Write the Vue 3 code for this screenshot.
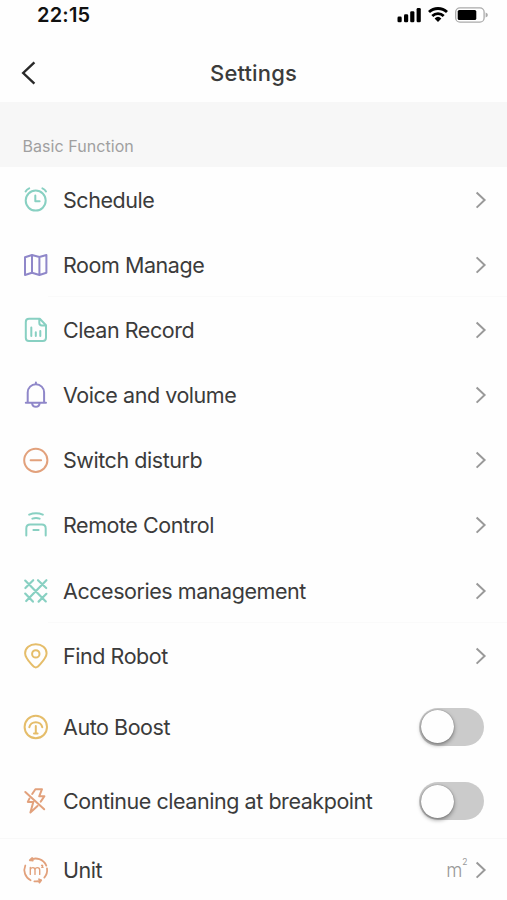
<script setup>
import { ref } from 'vue'

const rows = ref([
  { icon: 'clock', label: 'Schedule', tone: 'mint' },
  { icon: 'map', label: 'Room Manage', tone: 'violet' },
  { icon: 'file', label: 'Clean Record', tone: 'mint' },
  { icon: 'bell', label: 'Voice and volume', tone: 'violet' },
  { icon: 'minus', label: 'Switch disturb', tone: 'orange' },
  { icon: 'remote', label: 'Remote Control', tone: 'mint' },
  { icon: 'mesh', label: 'Accesories management', tone: 'mint' },
  { icon: 'pin', label: 'Find Robot', tone: 'gold' },
  { icon: 'boost', label: 'Auto Boost', tone: 'gold', toggle: true, on: false },
  { icon: 'flash', label: 'Continue cleaning at breakpoint', tone: 'orange', toggle: true, on: false },
  { icon: 'unit', label: 'Unit', tone: 'orange', value: 'm', power: '2' },
])
</script>

<template>
  <div class="screen">
    <div class="status">
      <span class="time">22:15</span>
      <svg class="signals" width="92" height="18" viewBox="0 0 92 18">
        <g fill="#000">
          <rect x="0.5" y="10.6" width="4.2" height="5.6" rx="1.3" />
          <rect x="7" y="8.2" width="4.2" height="8" rx="1.3" />
          <rect x="13.2" y="5.2" width="4.2" height="11" rx="1.3" />
          <rect x="19.6" y="1.9" width="4.2" height="14.3" rx="1.3" />
          <path d="M37.6 12.4 a5 5 0 0 1 6.8 0 L41 16 Z" />
        </g>
        <path d="M32 6.1 a13 13 0 0 1 18 0 M35.3 10 a8.2 8.2 0 0 1 11.4 0" fill="none" stroke="#000" stroke-width="2.8" />
        <rect x="58.7" y="1.9" width="28.4" height="14.2" rx="4.2" fill="#fff" stroke="#aaa" stroke-width="1.3" />
        <rect x="60.7" y="4" width="18.6" height="10" rx="1.6" fill="#000" />
        <path d="M88.6 6.5 q2.3 .6 2.3 2.5 q0 1.9 -2.3 2.5z" fill="#aaa" />
      </svg>
    </div>
    <header class="nav">
      <svg class="back" width="16" height="24" viewBox="0 0 16 24"><path d="M14.4 1.3 L3.2 12 L14.4 22.7" /></svg>
      <h1>Settings</h1>
    </header>
    <div class="section">Basic Function</div>
    <main>
      <div v-for="row in rows" :key="row.label" class="row" :class="[row.icon, { tall: row.toggle }]">
        <svg class="icon" :class="row.tone" width="28" height="28" viewBox="0 0 28 28">
          <g v-if="row.icon === 'clock'">
            <circle cx="13.7" cy="14.6" r="10" />
            <path d="M13.3 9.4 V15.3 H17.6 M3.6 5.4 Q4.8 3.3 7.2 2.3 M20.4 2.3 Q22.8 3.3 24 5.4" />
          </g>
          <g v-else-if="row.icon === 'map'">
            <path d="M3 6.3 L10 4 L17.4 6 L24.4 4 V21.8 L17.4 24 L10 21.8 L3 24 Z M10 4 V21.8 M17.4 6 V24" />
          </g>
          <g v-else-if="row.icon === 'file'">
            <path d="M7 2.8 H17.8 L24 9.2 V21.8 Q24 25 20.8 25 H7 Q3.8 25 3.8 21.8 V6 Q3.8 2.8 7 2.8 Z M17.3 3 V6.8 Q17.3 9.6 20 9.6 H24" />
            <path d="M9.3 11.5 V20 M13.8 16.2 V20 M18.3 15 V20" />
          </g>
          <g v-else-if="row.icon === 'bell'">
            <path d="M3.8 21.8 H24 M5.7 21.6 V11.4 A8.2 8.2 0 0 1 22.1 11.4 V21.6 M13.9 1.6 V3 M10 22.1 Q10.5 25.8 13.9 25.8 Q17.2 25.8 17.7 22.1" />
          </g>
          <g v-else-if="row.icon === 'minus'">
            <circle cx="13.8" cy="14.3" r="11.6" /><path d="M8.6 14.2 H19.1" />
          </g>
          <g v-else-if="row.icon === 'remote'">
            <path d="M7.2 3.6 Q14 .8 20.8 3.6 M10.4 7.6 Q14 6.4 17.6 7.6 M4.3 24.6 V17.5 Q4.3 13.6 8.2 13.6 H19.8 Q23.7 13.6 23.7 17.5 V24.6 M11.4 19 H16.6" />
          </g>
          <g v-else-if="row.icon === 'mesh'" class="bold">
            <path d="M3.2 3.6 L23.8 24.4 M24.4 3.2 L4.2 24 M3.4 11 L11.2 3.2 M16 3.2 L24.2 11 M3.2 16.6 L10.9 24.6 M16.6 24.6 L24.4 16.8" />
          </g>
          <g v-else-if="row.icon === 'pin'">
            <path d="M13.8 25.4 Q11.9 25.4 9.3 22.2 C5.8 18.2 3.1 15 3.1 11.2 C3.1 5.8 7.8 2.2 13.8 2.2 C19.9 2.2 24.6 5.8 24.6 11.2 C24.6 15 21.8 18.2 18.3 22.2 Q15.7 25.4 13.8 25.4 Z" />
            <circle cx="13.8" cy="11.9" r="3.7" />
          </g>
          <g v-else-if="row.icon === 'boost'">
            <circle cx="13.8" cy="14" r="11.2" />
            <path d="M7.3 14.2 A6.6 6.1 0 0 1 20.3 14.2 M13.8 13 V20.2 M12 20.4 H15.6" />
          </g>
          <g v-else-if="row.icon === 'flash'">
            <path d="M10.2 7 L13.4 2.2 H20 L17.2 9.3 H22.4 L18.7 14.6 M7.4 11.6 L5.8 14.9 H11.3 L8.4 25.5 L15.5 19 M3.3 5 L22.2 22.3" />
          </g>
          <g v-else>
            <path class="ring" d="M3.3 9.5 A11.4 11.4 0 0 0 8.6 24.2 M7.8 4.2 A11.4 11.4 0 0 1 24.3 9.6 M25 12.4 A11.4 11.4 0 0 1 22.3 21.6 M19.2 24.2 A11.4 11.4 0 0 1 12.4 25.3 M10.2 2 L7.8 4.2 L10.8 4.6 M17 23.2 L19.2 24.2 L17.4 26.6" />
            <path class="thin" d="M8.3 18.4 V11.4 M8.3 13.4 Q9 11.6 10.8 11.6 Q13 11.6 13 14 V18.4 M13 13.5 Q13.6 11.6 15.4 11.6 Q17.7 11.6 17.7 14 V18.4 M19.6 9.4 Q21 9 20.6 10.4 L19.8 11.4 H21" />
          </g>
        </svg>
        <span class="label">{{ row.label }}</span>
        <button v-if="row.toggle" class="switch" :class="{ on: row.on }" @click="row.on = !row.on"><i></i></button>
        <template v-else>
          <span v-if="row.value" class="value"><span>{{ row.value }}</span><span class="power">{{ row.power }}</span></span>
          <svg class="chevron" width="12" height="18" viewBox="0 0 12 18"><path d="M1.6 1.4 L9.6 9 L1.6 16.6" /></svg>
        </template>
      </div>
    </main>
  </div>
</template>

<style>
body { background: #fefefe; overflow: hidden; }
</style>

<style scoped>
.screen {
  width: 507px;
  height: 900px;
  overflow: hidden;
  box-sizing: border-box;
  background: #fefefe;
  color: #3b3b3b;
  font-family: Inter, "Liberation Sans", sans-serif;
}
.status {
  display: flex;
  justify-content: space-between;
  height: 30px;
  padding: 6px 18px 0 37px;
  box-sizing: border-box;
}
.time {
  color: #111;
  font-size: 20px;
  font-weight: 600;
  line-height: 19px;
  letter-spacing: .2px;
}
.nav {
  display: grid;
  grid-template-columns: 40px 1fr 40px;
  align-items: center;
  height: 72px;
  padding: 0 20px;
  box-sizing: border-box;
}
.nav h1 {
  margin: 13px 0 0;
  text-align: center;
  font-size: 22px;
  line-height: 28px;
  font-weight: 500;
  letter-spacing: .15px;
}
.back { margin-top: 13px; }
.back path { fill: none; stroke: #292929; stroke-width: 2.4; }
.section {
  height: 65.2px;
  padding: 32px 22.5px 0;
  box-sizing: border-box;
  background: #f7f7f7;
  color: #a0a0a0;
  font-size: 16px;
  line-height: 24px;
  letter-spacing: .06px;
}
.row {
  display: flex;
  align-items: center;
  height: 65.15px;
  padding: 0 20.5px 0 22px;
  box-sizing: border-box;
}
.row.tall { height: 74.7px; padding: 2px 23px 0 22px; }
.map, .mesh { background: linear-gradient(#fafafa, #fafafa) 48px 100% / 100% 1px no-repeat; }
.row.unit { height: 63px; border-top: 1px solid #f8f8f8; }
.icon { flex: none; fill: none; stroke: currentColor; stroke-width: 2; stroke-linecap: round; stroke-linejoin: round; }
.bold { stroke-width: 2.2; }
.ring { stroke-width: 1.8; }
.thin { stroke-width: 1.4; }
.mint { color: #88d0c2; }
.violet { color: #8f87c9; }
.orange { color: #e2a17c; }
.gold { color: #e5bd6a; }
.label {
  flex: 1;
  margin-left: 13px;
  font-size: 21.5px;
  line-height: 28px;
  letter-spacing: -.45px;
  white-space: nowrap;
}
.chevron { flex: none; }
.chevron path { fill: none; stroke: #999; stroke-width: 2; }
.value {
  display: flex;
  align-items: flex-start;
  margin-right: 7px;
  color: #999;
  font-size: 18.5px;
  line-height: 28px;
  font-weight: 300;
}
.power { font-size: 8.5px; line-height: 12px; font-weight: 400; }
.switch {
  flex: none;
  width: 65px;
  height: 38px;
  padding: 2px;
  border: 0;
  border-radius: 19px;
  background: #cbcbcb;
}
.switch i {
  display: block;
  width: 33px;
  height: 33px;
  border-radius: 50%;
  background: #fefefe;
  box-shadow: 0 2px 4px rgba(0, 0, 0, .4), 0 0 1px rgba(0, 0, 0, .5);
}
.switch.on { background: #88d0c2; }
.switch.on i { margin-left: auto; }
</style>
